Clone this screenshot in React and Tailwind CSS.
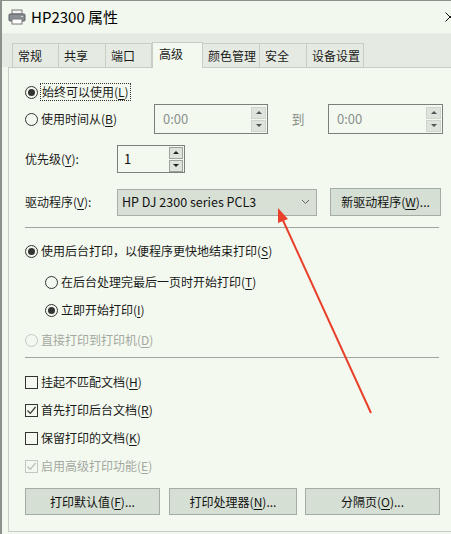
import { useState } from 'react'

const font = { fontFamily: '"Noto Sans CJK SC", "Noto Sans", sans-serif' }

const Radio = ({ checked, disabled }) => (
  <span
    className={`w-[13px] h-[13px] rounded-full border flex items-center justify-center shrink-0 bg-[#f3f9ef] ${
      disabled ? 'border-[#c4c8c2]' : 'border-[#333]'
    }`}
  >
    {checked && <span className="w-[7px] h-[7px] rounded-full bg-[#333]" />}
  </span>
)

const Check = ({ checked, disabled }) => (
  <span
    className={`w-[13px] h-[13px] border flex items-center justify-center shrink-0 ${
      disabled ? 'border-[#c4c8c2]' : 'border-[#333]'
    }`}
  >
    {checked && (
      <svg width="11" height="11" viewBox="0 0 11 11">
        <path d="M1.5 5.5 L4.3 8.3 L9.5 2" fill="none" stroke={disabled ? '#b8bcb6' : '#333'} strokeWidth="1.2" />
      </svg>
    )}
  </span>
)

const Key = ({ k }) => (
  <>
    (<span className="underline underline-offset-2">{k}</span>)
  </>
)

const SpinBtns = () => (
  <div className="flex flex-col gap-[1px] mr-[1px]">
    <div className="w-[15px] h-[12px] bg-[#dee3db] border border-[#cfd4cc] flex items-center justify-center">
      <span className="w-0 h-0 border-x-[3px] border-x-transparent border-b-[3px] border-b-[#555]" />
    </div>
    <div className="w-[15px] h-[12px] bg-[#dee3db] border border-[#cfd4cc] flex items-center justify-center">
      <span className="w-0 h-0 border-x-[3px] border-x-transparent border-t-[3px] border-t-[#555]" />
    </div>
  </div>
)

const TimeBox = ({ w }) => (
  <div className={`${w} h-[30px] border border-[#7b807a] flex items-center justify-between pl-[8px]`}>
    <span className="text-[13px] text-[#8a9090]">0:00</span>
    <SpinBtns />
  </div>
)

const Btn = ({ children, w }) => (
  <button className={`${w} h-[27px] bg-[#d6dfd4] border border-[#a4aca3] text-[12px] text-[#111] flex items-center justify-center`}>
    {children}
  </button>
)

const tabs = [
  { name: '常规', w: 'w-[47px]' },
  { name: '共享', w: 'w-[48px]' },
  { name: '端口', w: 'w-[47px]' },
  { name: '高级', w: 'w-[51px]' },
  { name: '颜色管理', w: 'w-[58px]' },
  { name: '安全', w: 'w-[48px]' },
  { name: '设备设置', w: 'w-[58px]' },
]

export default function App() {
  const [tab] = useState('高级')

  return (
    <div style={font} className="relative w-[451px] h-[534px] overflow-hidden bg-[#f2f8ee] border-l-2 border-t border-[#8c918b] flex flex-col text-[#1a1a1a]">
      {/* Title bar */}
      <div className="h-[32px] flex items-center pl-[6px] shrink-0">
        <svg width="18" height="16" viewBox="0 0 18 16" className="mr-[5px]">
          <rect x="4" y="1" width="10" height="4" fill="#f4f4f4" stroke="#777" />
          <rect x="1" y="5" width="16" height="7" rx="1" fill="#8a8f94" stroke="#5c6166" />
          <rect x="4" y="10" width="10" height="5" fill="#fff" stroke="#777" />
          <rect x="13" y="7" width="2" height="1" fill="#d0d4d8" />
        </svg>
        <span className="text-[15px] text-black">HP2300 属性</span>
        <svg width="10" height="10" viewBox="0 0 10 10" className="ml-auto mr-[-4px]">
          <path d="M0.5 0.5 L9.5 9.5 M9.5 0.5 L0.5 9.5" stroke="#111" strokeWidth="1" />
        </svg>
      </div>

      {/* Tab strip */}
      <div className="h-[34px] shrink-0 bg-[#e5eae2] flex items-end pl-[8px] border-t border-[#e9eee6]">
        {tabs.map((t) =>
          t.name === tab ? (
            <div
              key={t.name}
              className={`${t.w} h-[26px] -mb-[1px] relative z-10 bg-[#f3f9ef] border border-b-0 border-[#c8cec5] pl-[6px] pt-[2px] text-[12px]`}
            >
              {t.name}
            </div>
          ) : (
            <div
              key={t.name}
              className={`${t.w} h-[24px] border border-b-0 border-[#c8cec5] -ml-[1px] first:ml-[2px] pl-[5px] pt-[3px] text-[12px]`}
            >
              {t.name}
            </div>
          )
        )}
      </div>

      {/* Panel */}
      <div className="ml-[6px] mr-[-10px] h-[465px] border border-[#c8cec5] bg-[#f3f9ef] flex flex-col pl-[16px] pt-[11px] text-[12px]">
        <div className="h-[26px] flex items-center">
          <Radio checked />
          <span className="ml-[2px] px-[1px] border border-dotted border-[#333] leading-[16px]">
            始终可以使用<Key k="L" />
          </span>
        </div>

        <div className="h-[28px] flex items-center">
          <div className="w-[129px] flex items-center">
            <Radio />
            <span className="ml-[3px]">
              使用时间从<Key k="B" />
            </span>
          </div>
          <TimeBox w="w-[114px]" />
          <div className="w-[60px] text-center text-[13px] text-[#8a8f88]">到</div>
          <TimeBox w="w-[115px]" />
        </div>

        <div className="h-[28px] mt-[12px] flex items-center">
          <div className="w-[92px]">
            优先级<Key k="Y" />:
          </div>
          <div className="w-[68px] h-[28px] border border-[#7b807a] flex items-center justify-between pl-[6px]">
            <span className="text-[13px] text-[#111]">1</span>
            <div className="flex flex-col gap-[1px] mr-[1px]">
              <div className="w-[14px] h-[12px] bg-[#dee3db] border border-[#9ca39b] flex items-center justify-center">
                <span className="w-0 h-0 border-x-[3px] border-x-transparent border-b-[3px] border-b-[#222]" />
              </div>
              <div className="w-[14px] h-[12px] bg-[#dee3db] border border-[#9ca39b] flex items-center justify-center">
                <span className="w-0 h-0 border-x-[3px] border-x-transparent border-t-[3px] border-t-[#222]" />
              </div>
            </div>
          </div>
        </div>

        <div className="h-[28px] mt-[15px] flex items-center">
          <div className="w-[92px]">
            驱动程序<Key k="V" />:
          </div>
          <div className="w-[200px] h-[27px] bg-[#d8e0d6] border border-[#a7aea6] flex items-center justify-between pl-[4px] pr-[6px]">
            <span className="text-[12.5px] text-[#111]">HP DJ 2300 series PCL3</span>
            <svg width="9" height="6" viewBox="0 0 9 6">
              <path d="M1 1 L4.5 4.5 L8 1" fill="none" stroke="#666" strokeWidth="1" />
            </svg>
          </div>
          <Btn w="w-[111px] ml-[13px] h-[28px]">
            新驱动程序<Key k="W" />...
          </Btn>
        </div>

        <div className="mt-[11px] w-[414px] h-px bg-[#a0a59f]" />

        <div className="h-[26px] mt-[10px] flex items-center">
          <Radio checked />
          <span className="ml-[3px]">
            使用后台打印，以便程序更快地结束打印<Key k="S" />
          </span>
        </div>
        <div className="h-[26px] mt-[5px] pl-[20px] flex items-center">
          <Radio />
          <span className="ml-[3px]">
            在后台处理完最后一页时开始打印<Key k="T" />
          </span>
        </div>
        <div className="h-[26px] mt-[2px] pl-[20px] flex items-center">
          <Radio checked />
          <span className="ml-[3px]">
            立即开始打印<Key k="I" />
          </span>
        </div>
        <div className="h-[26px] mt-[4px] flex items-center text-[#a3a8a1]">
          <Radio disabled />
          <span className="ml-[3px]">
            直接打印到打印机<Key k="D" />
          </span>
        </div>

        <div className="mt-[4px] w-[414px] h-px bg-[#a0a59f]" />

        <div className="h-[26px] mt-[11px] flex items-center">
          <Check />
          <span className="ml-[3px]">
            挂起不匹配文档<Key k="H" />
          </span>
        </div>
        <div className="h-[26px] mt-[2px] flex items-center">
          <Check checked />
          <span className="ml-[3px]">
            首先打印后台文档<Key k="R" />
          </span>
        </div>
        <div className="h-[26px] mt-[2px] flex items-center">
          <Check />
          <span className="ml-[3px]">
            保留打印的文档<Key k="K" />
          </span>
        </div>
        <div className="h-[26px] mt-[2px] flex items-center text-[#a3a8a1]">
          <Check checked disabled />
          <span className="ml-[3px]">
            启用高级打印功能<Key k="E" />
          </span>
        </div>

        <div className="mt-[9px] flex items-center">
          <Btn w="w-[135px]">
            打印默认值<Key k="F" />...
          </Btn>
          <Btn w="w-[128px] ml-[9px]">
            打印处理器<Key k="N" />...
          </Btn>
          <Btn w="w-[135px] ml-[8px]">
            分隔页<Key k="O" />...
          </Btn>
        </div>
      </div>

      {/* Red annotation arrow */}
      <svg className="absolute inset-0 pointer-events-none" width="451" height="534" viewBox="0 0 451 534">
        <line x1="369" y1="412" x2="279" y2="215" stroke="#e8402a" strokeWidth="2" />
        <polygon points="276,207 286,218 276,222" fill="#e8402a" />
      </svg>
    </div>
  )
}
